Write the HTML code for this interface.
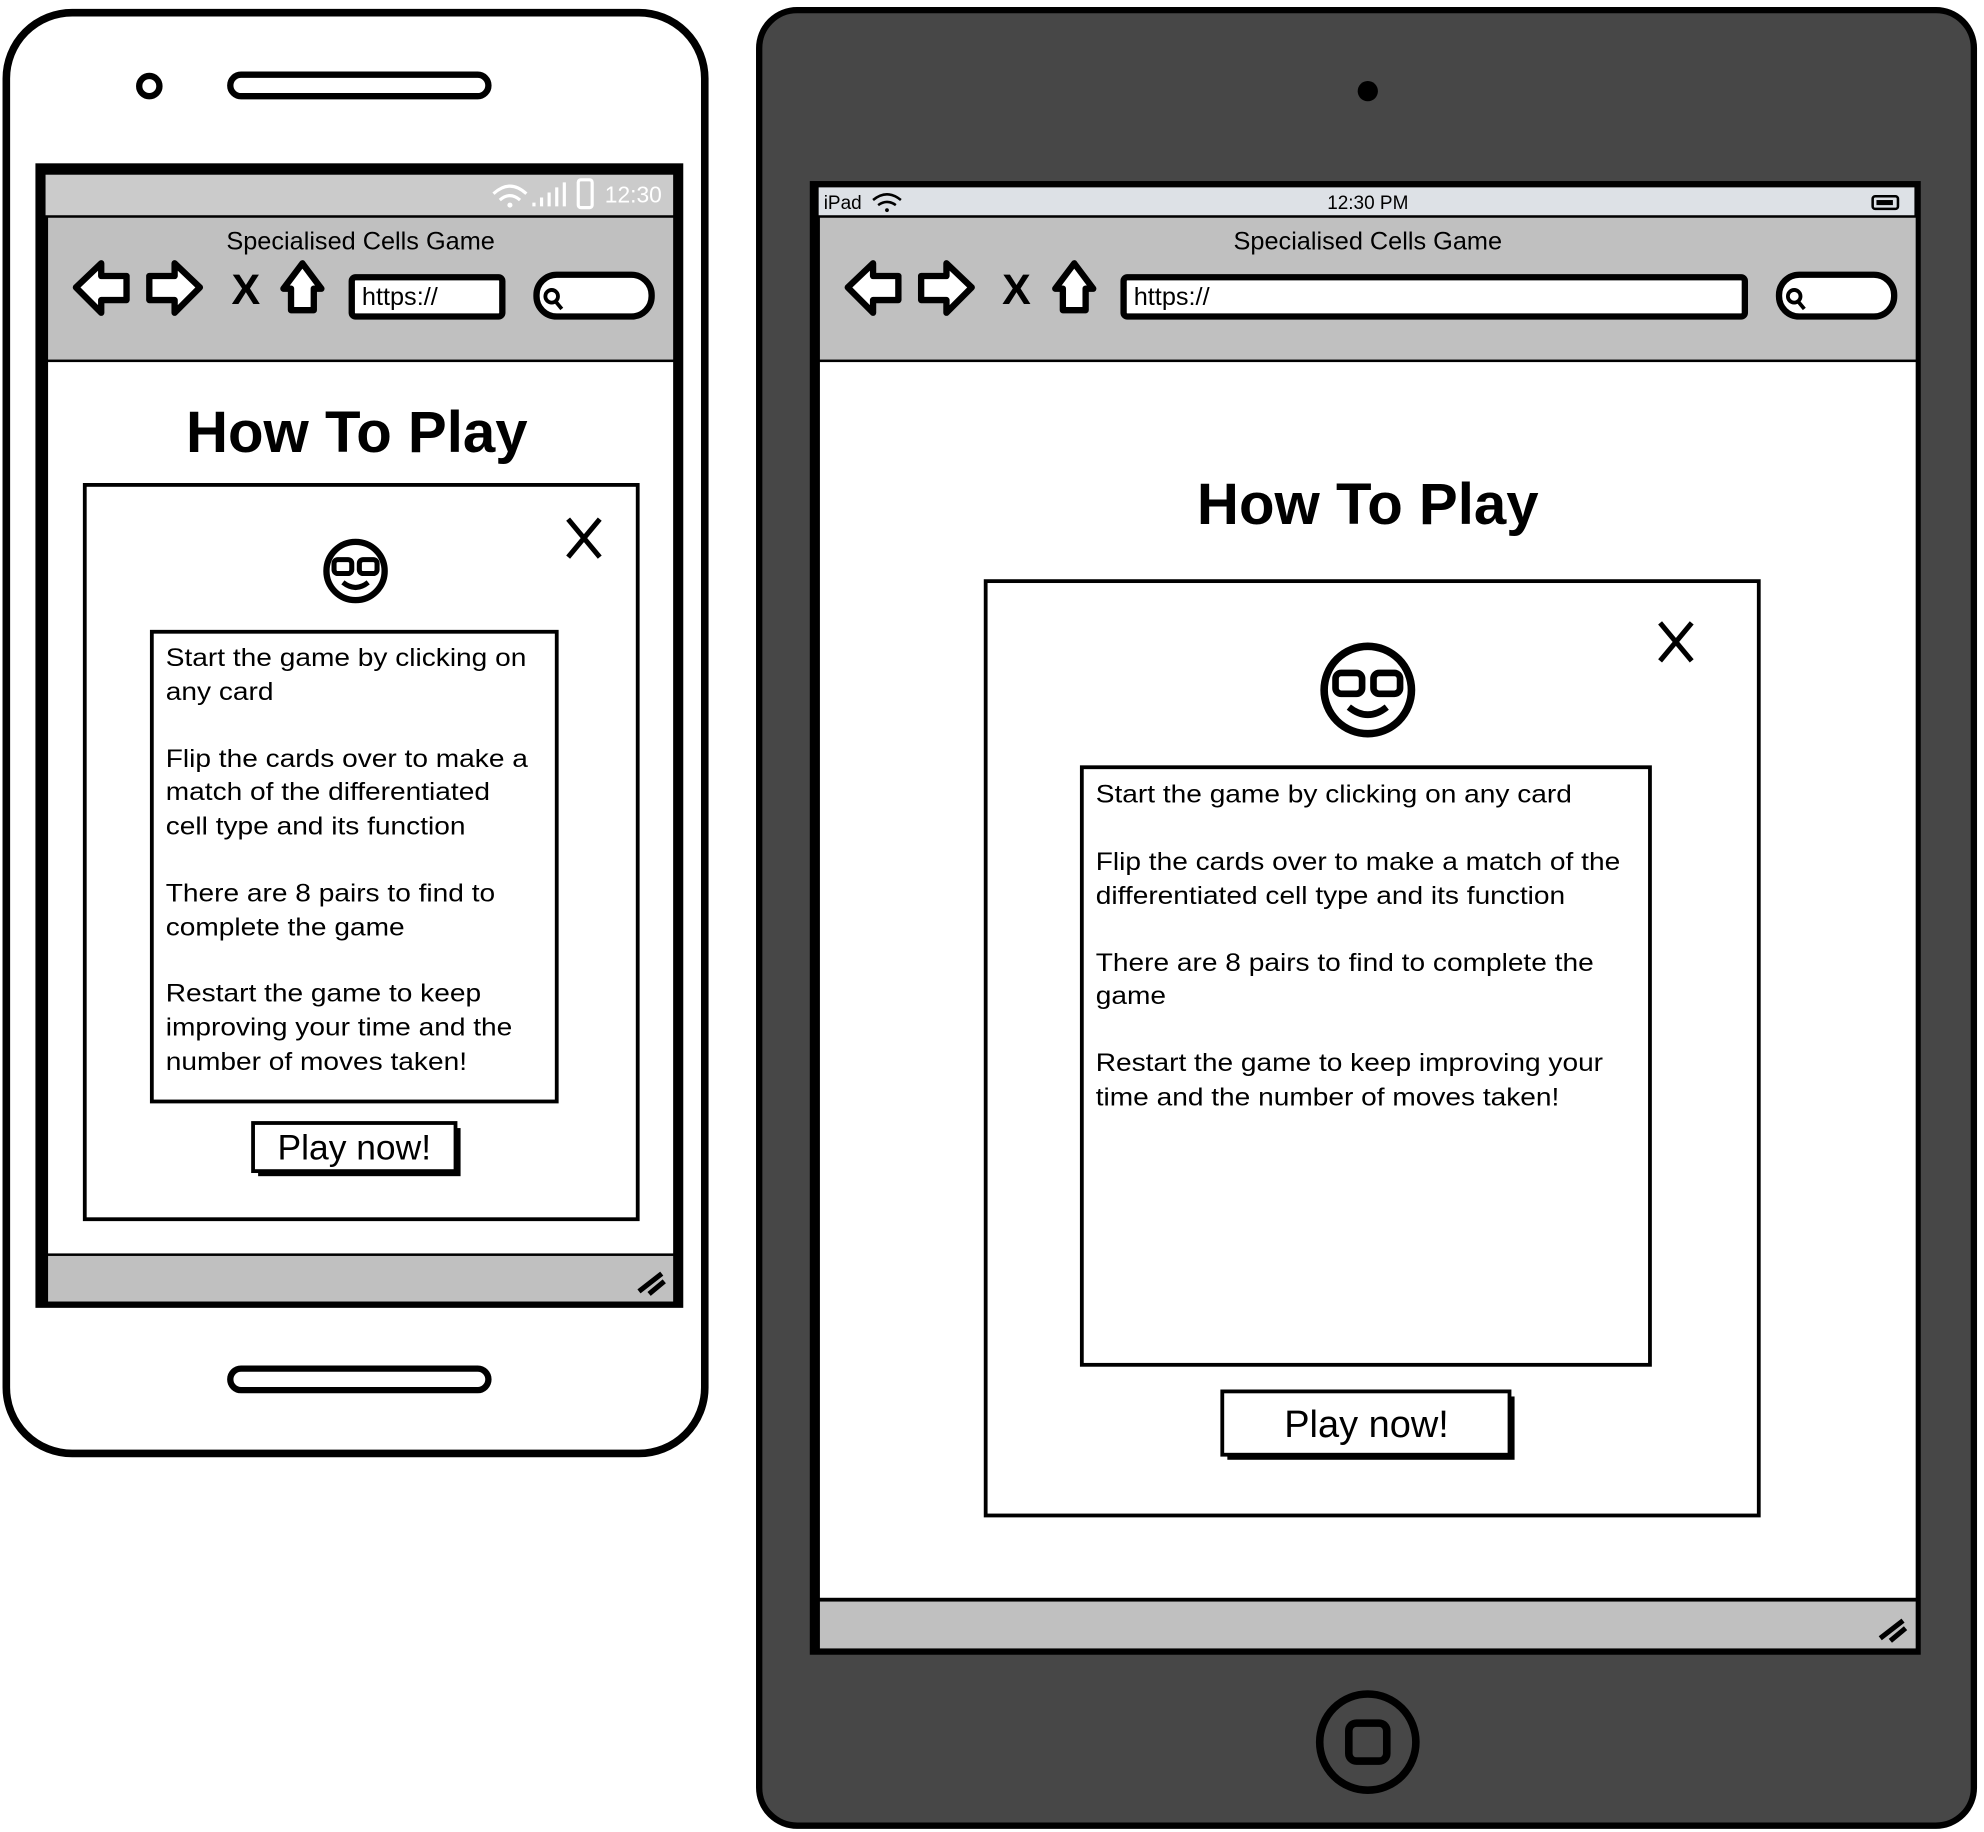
<!DOCTYPE html>
<html><head><meta charset="utf-8"><style>
html,body{margin:0;padding:0;background:#fff;}
svg{display:block;}
text{font-family:"Liberation Sans",sans-serif;fill:#000;}
</style></head><body>
<svg width="1984" height="1832" viewBox="0 0 1568 1447" preserveAspectRatio="none" xmlns="http://www.w3.org/2000/svg">
<rect width="1568" height="1447" fill="#fff"/>
<!-- PHONE -->
<rect x="5" y="10" width="552" height="1138" rx="52" fill="#fff" stroke="#000" stroke-width="6"/>
<circle cx="118" cy="68" r="8" fill="none" stroke="#000" stroke-width="5"/>
<rect x="182" y="59" width="204" height="17" rx="8.5" fill="#fff" stroke="#000" stroke-width="5"/>
<rect x="182" y="1081" width="204" height="17" rx="8.5" fill="#fff" stroke="#000" stroke-width="5"/>
<rect x="28" y="129" width="512" height="904" fill="#000"/>
<rect x="36" y="138" width="496" height="32" fill="#cbcbcb"/>
<text x="478" y="160" font-size="18" style="fill:#fff">12:30</text>
<rect x="457" y="142" width="11" height="22" rx="2" fill="none" stroke="#fff" stroke-width="2.5"/>
<path d="M422 163v-3M428 163v-7M434 163v-11M440 163v-15M446 163v-19" stroke="#fff" stroke-width="2.5"/>
<path d="M390 153q13-12 26 0M395 158q8-7 16 0" stroke="#fff" stroke-width="2.5" fill="none"/>
<circle cx="403" cy="162" r="2" fill="#fff"/>
<rect x="38" y="172" width="494" height="112" fill="#c0c0c0"/>
<text x="285" y="197" font-size="20" text-anchor="middle">Specialised Cells Game</text>
<g fill="#fff" stroke="#000" stroke-width="5" stroke-linejoin="round">
<path d="M60 227l20-19v10h20v19h-20v10z"/>
<path d="M158 227l-20-19v10h-20v19h20v10z"/>
<path d="M224 228l15-20 15 20h-6v17h-18v-17z"/>
<rect x="278" y="219" width="119" height="31" rx="3"/>
<rect x="424" y="217" width="91" height="33" rx="16"/>
</g>
<text x="183" y="240" font-size="34" font-weight="bold">X</text>
<text x="286" y="241" font-size="20">https://</text>
<circle cx="436" cy="234" r="5" fill="none" stroke="#000" stroke-width="3"/><path d="M439 238l5 6" stroke="#000" stroke-width="3"/>
<rect x="38" y="286" width="494" height="704" fill="#fff"/>
<rect x="38" y="992" width="494" height="36" fill="#c0c0c0"/>
<path d="M505 1020l18-14M513 1022l12-10" stroke="#000" stroke-width="4"/>
<text x="282" y="357" font-size="46" font-weight="bold" text-anchor="middle">How To Play</text>
<rect x="67" y="383" width="437" height="580" fill="#fff" stroke="#000" stroke-width="3"/>
<path d="M449 410l25 30M474 410l-25 30" stroke="#000" stroke-width="4"/>
<g transform="translate(281,451)"><circle r="23" fill="none" stroke="#000" stroke-width="5"/>
<rect x="-17" y="-9" width="14" height="11" rx="3" fill="none" stroke="#000" stroke-width="4"/><rect x="3" y="-9" width="14" height="11" rx="3" fill="none" stroke="#000" stroke-width="4"/>
<path d="M-10 9q10 8 20 0" fill="none" stroke="#000" stroke-width="4"/></g>
<rect x="120" y="499" width="320" height="371" fill="#fff" stroke="#000" stroke-width="3"/>
<g font-size="20" transform="translate(131,0) scale(1.11,1) translate(-131,0)">
<text x="131" y="526">Start the game by clicking on</text><text x="131" y="553">any card</text>
<text x="131" y="606">Flip the cards over to make a</text><text x="131" y="632">match of the differentiated</text><text x="131" y="659">cell type and its function</text>
<text x="131" y="712">There are 8 pairs to find to</text><text x="131" y="739">complete the game</text>
<text x="131" y="791">Restart the game to keep</text><text x="131" y="818">improving your time and the</text><text x="131" y="845">number of moves taken!</text>
</g>
<rect x="204" y="891" width="160" height="38" fill="#000"/>
<rect x="200" y="887" width="160" height="38" fill="#fff" stroke="#000" stroke-width="3"/>
<text x="280" y="916" font-size="28" text-anchor="middle">Play now!</text>
<!-- TABLET -->
<rect x="600" y="8" width="960" height="1434" rx="30" fill="#474747" stroke="#000" stroke-width="5"/>
<circle cx="1081" cy="72" r="8" fill="#000"/>
<rect x="640" y="143" width="878" height="1164" fill="#000"/>
<rect x="647" y="148" width="866" height="22" fill="#dde1e6"/>
<text x="651" y="165" font-size="15">iPad</text>
<path d="M690 158q11-9 22 0M694 162q7-5 14 0" stroke="#000" stroke-width="2" fill="none"/><circle cx="701" cy="166" r="1.5"/>
<text x="1081" y="165" font-size="15" text-anchor="middle">12:30 PM</text>
<rect x="1480" y="155" width="20" height="10" rx="2" fill="none" stroke="#000" stroke-width="2"/><rect x="1483" y="158" width="13" height="4" fill="#000"/>
<rect x="648" y="172" width="866" height="112" fill="#c0c0c0"/>
<text x="1081" y="197" font-size="20" text-anchor="middle">Specialised Cells Game</text>
<g fill="#fff" stroke="#000" stroke-width="5" stroke-linejoin="round">
<path d="M670 227l20-19v10h20v19h-20v10z"/>
<path d="M768 227l-20-19v10h-20v19h20v10z"/>
<path d="M834 228l15-20 15 20h-6v17h-18v-17z"/>
<rect x="888" y="219" width="491" height="31" rx="3"/>
<rect x="1406" y="217" width="91" height="33" rx="16"/>
</g>
<text x="792" y="240" font-size="34" font-weight="bold">X</text>
<text x="896" y="241" font-size="20">https://</text>
<circle cx="1418" cy="234" r="5" fill="none" stroke="#000" stroke-width="3"/><path d="M1421 238l5 6" stroke="#000" stroke-width="3"/>
<rect x="648" y="286" width="866" height="976" fill="#fff"/>
<rect x="648" y="1265" width="866" height="37" fill="#c0c0c0"/>
<path d="M1486 1294l18-14M1494 1296l12-10" stroke="#000" stroke-width="4"/>
<circle cx="1081" cy="1376" r="38" fill="none" stroke="#000" stroke-width="6"/>
<rect x="1066" y="1361" width="30" height="30" rx="6" fill="none" stroke="#000" stroke-width="6"/>
<text x="1081" y="414" font-size="46" font-weight="bold" text-anchor="middle">How To Play</text>
<rect x="779" y="459" width="611" height="738" fill="#fff" stroke="#000" stroke-width="3"/>
<path d="M1312 492l25 30M1337 492l-25 30" stroke="#000" stroke-width="4"/>
<g transform="translate(1081,545) scale(1.5)"><circle r="23" fill="none" stroke="#000" stroke-width="4"/>
<rect x="-17" y="-9" width="14" height="11" rx="3" fill="none" stroke="#000" stroke-width="3.5"/><rect x="3" y="-9" width="14" height="11" rx="3" fill="none" stroke="#000" stroke-width="3.5"/>
<path d="M-10 9q10 8 20 0" fill="none" stroke="#000" stroke-width="3.5"/></g>
<rect x="855" y="606" width="449" height="472" fill="#fff" stroke="#000" stroke-width="3"/>
<g font-size="20" transform="translate(866,0) scale(1.11,1) translate(-866,0)">
<text x="866" y="634">Start the game by clicking on any card</text>
<text x="866" y="687">Flip the cards over to make a match of the</text><text x="866" y="714">differentiated cell type and its function</text>
<text x="866" y="767">There are 8 pairs to find to complete the</text><text x="866" y="793">game</text>
<text x="866" y="846">Restart the game to keep improving your</text><text x="866" y="873">time and the number of moves taken!</text>
</g>
<rect x="970" y="1103" width="227" height="50" fill="#000"/>
<rect x="966" y="1099" width="227" height="50" fill="#fff" stroke="#000" stroke-width="3"/>
<text x="1080" y="1135" font-size="30" text-anchor="middle">Play now!</text>
</svg>
</body></html>
